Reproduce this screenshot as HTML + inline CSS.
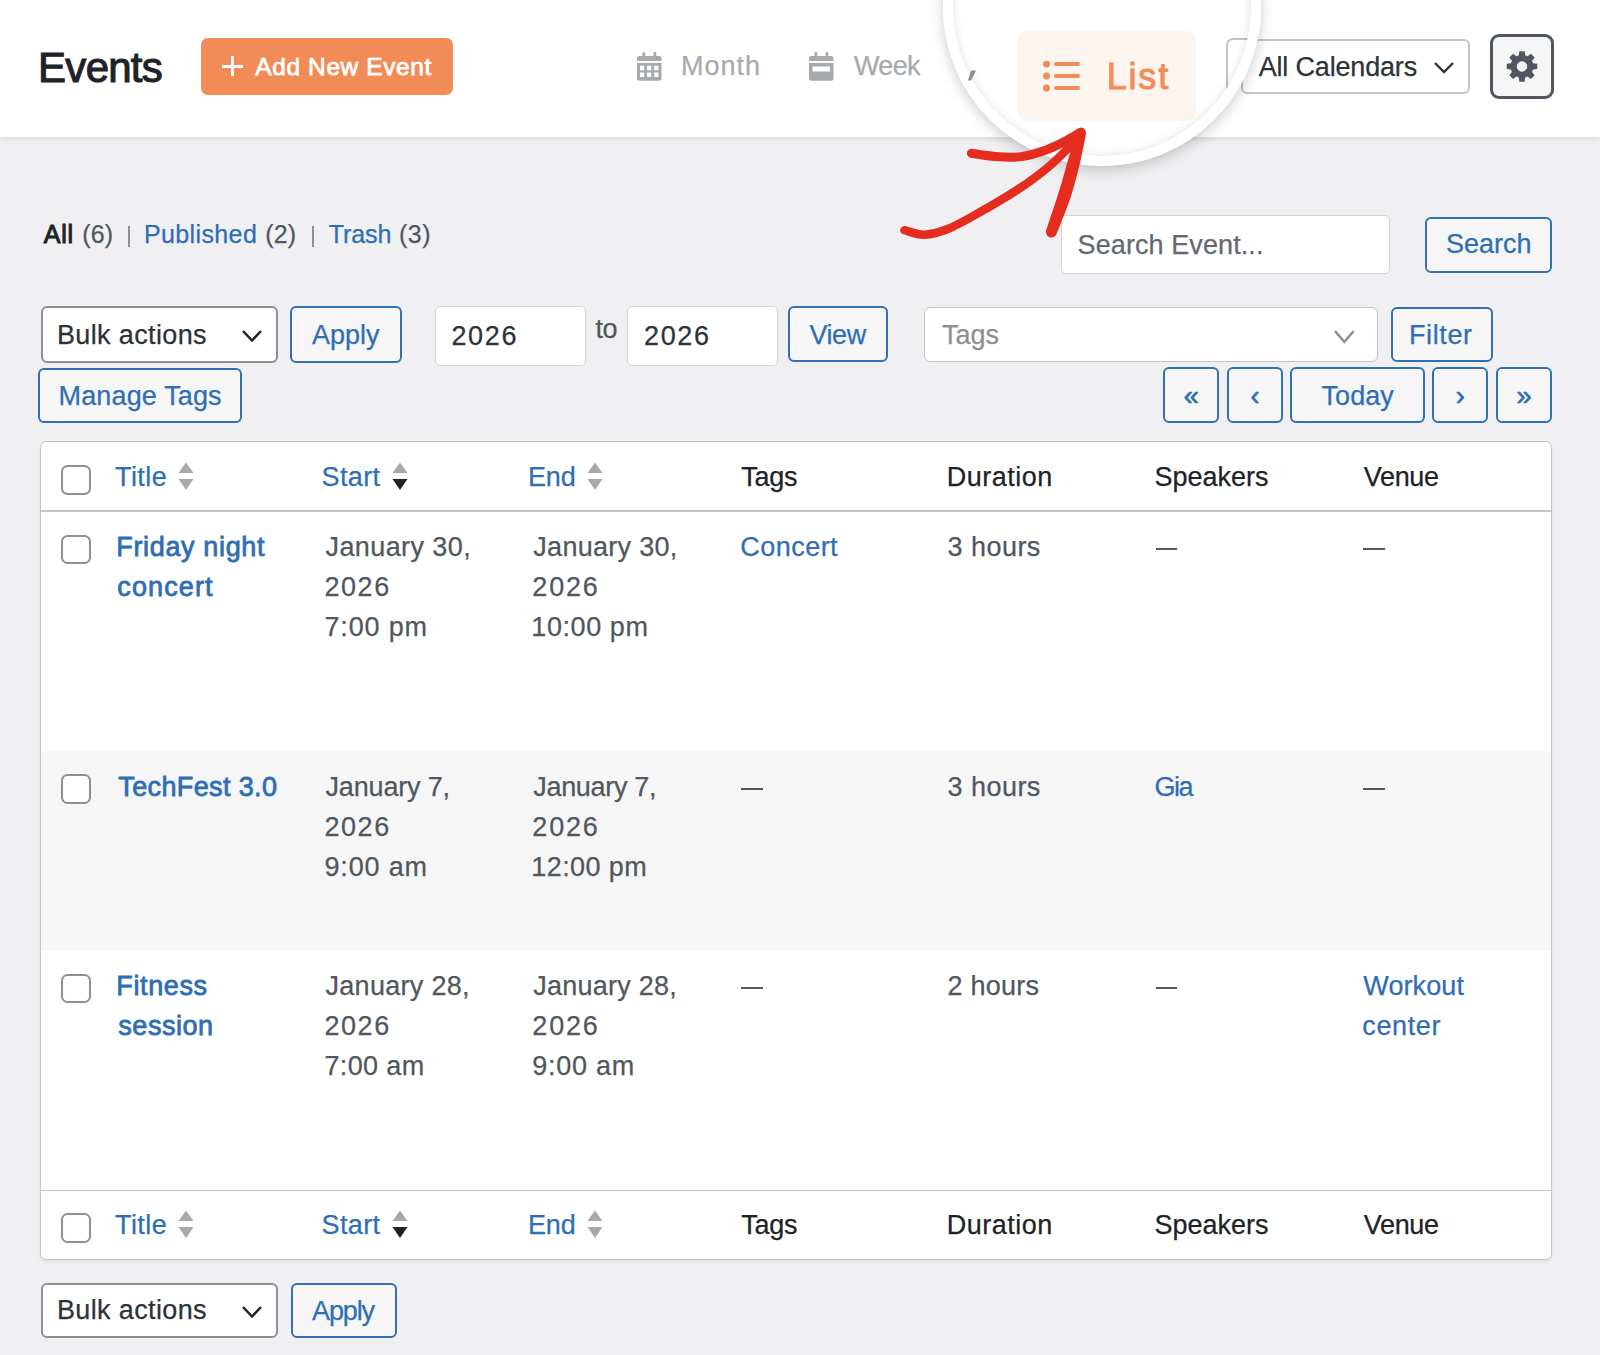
<!DOCTYPE html><html><head><meta charset="utf-8"><style>html,body{margin:0;padding:0;}body{width:1600px;height:1355px;position:relative;overflow:hidden;background:#f0f0f2;font-family:"Liberation Sans",sans-serif;}span{position:absolute;}</style></head><body>
<div style="position:absolute;left:0;top:0;width:1600px;height:136.5px;background:#fff;box-shadow:0 1.5px 6px rgba(0,0,0,0.10);"></div>
<div style="position:absolute;left:201.3px;top:37.8px;width:252.00px;height:57.20px;box-sizing:border-box;background:#f18c56;border-radius:7px;"></div>
<div style="position:absolute;left:230.8px;top:56px;width:3.00px;height:20.00px;box-sizing:border-box;background:#fff;"></div>
<div style="position:absolute;left:222px;top:64.5px;width:20.60px;height:3.00px;box-sizing:border-box;background:#fff;"></div>
<svg style="position:absolute;left:636.5px;top:52px" width="25" height="29" viewBox="0 0 25 29"><rect x="5.5" y="0" width="2.8" height="6" rx="1.3" fill="#a7aaad"/><rect x="16.5" y="0" width="2.8" height="6" rx="1.3" fill="#a7aaad"/><path d="M0 9V6.5A2.5 2.5 0 0 1 2.5 4H22A2.5 2.5 0 0 1 24.5 6.5V9z" fill="#a7aaad"/><path d="M0 11H24.5V26.2A2.5 2.5 0 0 1 22 28.7H2.5A2.5 2.5 0 0 1 0 26.2z M3.05 13.80h4.2v4.4h-4.2z M10.10 13.80h4.2v4.4h-4.2z M17.20 13.80h4.2v4.4h-4.2z M3.05 20.60h4.2v4.4h-4.2z M10.10 20.60h4.2v4.4h-4.2z M17.20 20.60h4.2v4.4h-4.2z" fill="#a7aaad" fill-rule="evenodd"/></svg>
<svg style="position:absolute;left:808.5px;top:52px" width="25" height="29" viewBox="0 0 25 29"><rect x="5.5" y="0" width="2.8" height="6" rx="1.3" fill="#a7aaad"/><rect x="16.5" y="0" width="2.8" height="6" rx="1.3" fill="#a7aaad"/><path d="M0 9V6.5A2.5 2.5 0 0 1 2.5 4H22A2.5 2.5 0 0 1 24.5 6.5V9z" fill="#a7aaad"/><path d="M0 11H24.5V26.2A2.5 2.5 0 0 1 22 28.7H2.5A2.5 2.5 0 0 1 0 26.2z M3.5 14.5v4.9h17.5v-4.9z" fill="#a7aaad" fill-rule="evenodd"/></svg>
<div style="position:absolute;left:1240.6px;top:38.8px;width:229.50px;height:55.20px;box-sizing:border-box;background:#fff;border:2px solid #c3c4c7;border-radius:6px;"></div>
<svg style="position:absolute;left:1432px;top:60px" width="24" height="15" viewBox="0 0 24 15"><path d="M3 3l9 9l9-9" stroke="#2c3338" stroke-width="2.4" fill="none"/></svg>
<div style="position:absolute;left:1490.3px;top:34.2px;width:63.90px;height:64.40px;box-sizing:border-box;background:#f6f6f6;border:3.5px solid #50575e;border-radius:9px;"></div>
<svg style="position:absolute;left:0;top:0" width="1600" height="140"><path d="M1533.05 63.22 L1537.27 63.72 L1537.27 69.08 L1533.05 69.58 L1532.06 71.97 L1534.69 75.30 L1530.90 79.09 L1527.57 76.46 L1525.18 77.45 L1524.68 81.67 L1519.32 81.67 L1518.82 77.45 L1516.43 76.46 L1513.10 79.09 L1509.31 75.30 L1511.94 71.97 L1510.95 69.58 L1506.73 69.08 L1506.73 63.72 L1510.95 63.22 L1511.94 60.83 L1509.31 57.50 L1513.10 53.71 L1516.43 56.34 L1518.82 55.35 L1519.32 51.13 L1524.68 51.13 L1525.18 55.35 L1527.57 56.34 L1530.90 53.71 L1534.69 57.50 L1532.06 60.83Z M1527.2 66.4 A5.2 5.2 0 1 0 1516.8 66.4 A5.2 5.2 0 1 0 1527.2 66.4Z" fill="#50575e" fill-rule="evenodd"/></svg>
<div style="position:absolute;left:128.4px;top:225.6px;width:2.00px;height:21.90px;box-sizing:border-box;background:#8c8f94;"></div>
<div style="position:absolute;left:311.5px;top:225.6px;width:2.00px;height:21.90px;box-sizing:border-box;background:#8c8f94;"></div>
<div style="position:absolute;left:1061.4px;top:215.4px;width:328.90px;height:58.80px;box-sizing:border-box;background:#fff;border:1.5px solid #d3d4d7;border-radius:5px;"></div>
<div style="position:absolute;left:1425.4px;top:217px;width:126.60px;height:55.60px;box-sizing:border-box;background:#f6f6f7;border:2px solid #3170b4;border-radius:6px;"></div>
<div style="position:absolute;left:40.5px;top:306.25px;width:237.50px;height:56.25px;box-sizing:border-box;background:#fff;border:2px solid #8c8f94;border-radius:6px;"></div>
<svg style="position:absolute;left:240px;top:328px" width="24" height="15" viewBox="-2 -2 24 15"><path d="M1 1L10.0 10.5L19 1" stroke="#1d2327" stroke-width="2.5" fill="none"/></svg>
<div style="position:absolute;left:290px;top:306px;width:111.75px;height:56.50px;box-sizing:border-box;background:#f6f6f7;border:2px solid #3170b4;border-radius:6px;"></div>
<div style="position:absolute;left:435px;top:306.4px;width:150.60px;height:59.60px;box-sizing:border-box;background:#fff;border:1.5px solid #d3d4d7;border-radius:5px;"></div>
<div style="position:absolute;left:627px;top:306.4px;width:150.60px;height:59.60px;box-sizing:border-box;background:#fff;border:1.5px solid #d3d4d7;border-radius:5px;"></div>
<div style="position:absolute;left:788px;top:306.4px;width:100.00px;height:56.10px;box-sizing:border-box;background:#f6f6f7;border:2px solid #3170b4;border-radius:6px;"></div>
<div style="position:absolute;left:924.4px;top:306.5px;width:453.80px;height:55.30px;box-sizing:border-box;background:#fff;border:1.5px solid #c3c4c7;border-radius:6px;"></div>
<svg style="position:absolute;left:1332px;top:328px" width="24.7" height="16.4" viewBox="-2 -2 24.7 16.4"><path d="M1 1L10.35 11.9L19.7 1" stroke="#8c8f94" stroke-width="2.5" fill="none"/></svg>
<div style="position:absolute;left:1390.6px;top:306.5px;width:102.40px;height:55.30px;box-sizing:border-box;background:#f6f6f7;border:2px solid #3170b4;border-radius:6px;"></div>
<div style="position:absolute;left:38.25px;top:367.5px;width:203.75px;height:55.75px;box-sizing:border-box;background:#f6f6f7;border:2px solid #3170b4;border-radius:6px;"></div>
<div style="position:absolute;left:1163.3px;top:367.2px;width:56.10px;height:55.70px;box-sizing:border-box;background:#f6f6f7;border:2px solid #3170b4;border-radius:6px;"></div>
<div style="position:absolute;left:1163.3px;top:368.8px;width:56.10px;height:55.7px;text-align:center;font:400 27px/55.7px 'Liberation Sans',sans-serif;color:#2f6eb3;-webkit-text-stroke:0.7px #2f6eb3;">«</div>
<div style="position:absolute;left:1226.8px;top:367.2px;width:56.60px;height:55.70px;box-sizing:border-box;background:#f6f6f7;border:2px solid #3170b4;border-radius:6px;"></div>
<div style="position:absolute;left:1226.8px;top:368.8px;width:56.60px;height:55.7px;text-align:center;font:400 27px/55.7px 'Liberation Sans',sans-serif;color:#2f6eb3;-webkit-text-stroke:0.7px #2f6eb3;">‹</div>
<div style="position:absolute;left:1290.4px;top:367.2px;width:134.50px;height:55.70px;box-sizing:border-box;background:#f6f6f7;border:2px solid #3170b4;border-radius:6px;"></div>
<div style="position:absolute;left:1290.4px;top:368.8px;width:134.50px;height:55.7px;text-align:center;font:400 27px/55.7px 'Liberation Sans',sans-serif;color:#2f6eb3;-webkit-text-stroke:0.25px #2f6eb3;">Today</div>
<div style="position:absolute;left:1431.9px;top:367.2px;width:56.50px;height:55.70px;box-sizing:border-box;background:#f6f6f7;border:2px solid #3170b4;border-radius:6px;"></div>
<div style="position:absolute;left:1431.9px;top:368.8px;width:56.50px;height:55.7px;text-align:center;font:400 27px/55.7px 'Liberation Sans',sans-serif;color:#2f6eb3;-webkit-text-stroke:0.7px #2f6eb3;">›</div>
<div style="position:absolute;left:1495.8px;top:367.2px;width:56.50px;height:55.70px;box-sizing:border-box;background:#f6f6f7;border:2px solid #3170b4;border-radius:6px;"></div>
<div style="position:absolute;left:1495.8px;top:368.8px;width:56.50px;height:55.7px;text-align:center;font:400 27px/55.7px 'Liberation Sans',sans-serif;color:#2f6eb3;-webkit-text-stroke:0.7px #2f6eb3;">»</div>
<div style="position:absolute;left:39.5px;top:441px;width:1512.50px;height:819.00px;box-sizing:border-box;background:#fff;border:1.5px solid #c3c4c7;border-radius:6px;box-shadow:0 2px 4px rgba(0,0,0,0.06);"></div>
<div style="position:absolute;left:41px;top:750.5px;width:1509.50px;height:199.50px;box-sizing:border-box;background:#f6f6f7;"></div>
<div style="position:absolute;left:41px;top:510px;width:1509.50px;height:1.50px;box-sizing:border-box;background:#c3c4c7;"></div>
<div style="position:absolute;left:41px;top:1189.5px;width:1509.50px;height:1.50px;box-sizing:border-box;background:#c3c4c7;"></div>
<div style="position:absolute;left:61.2px;top:465px;width:29.70px;height:29.70px;box-sizing:border-box;background:#fff;border:2px solid #8c8f94;border-radius:6.5px;"></div>
<svg style="position:absolute;left:178px;top:462px" width="16" height="28" viewBox="0 0 16 28"><path d="M8 0.5L15.5 11H0.5z" fill="#a7aaad"/><path d="M0.5 17H15.5L8 28z" fill="#a7aaad"/></svg>
<svg style="position:absolute;left:392px;top:462px" width="16" height="28" viewBox="0 0 16 28"><path d="M8 0.5L15.5 11H0.5z" fill="#a7aaad"/><path d="M0.5 17H15.5L8 28z" fill="#1d2327"/></svg>
<svg style="position:absolute;left:587px;top:462px" width="16" height="28" viewBox="0 0 16 28"><path d="M8 0.5L15.5 11H0.5z" fill="#a7aaad"/><path d="M0.5 17H15.5L8 28z" fill="#a7aaad"/></svg>
<div style="position:absolute;left:61.2px;top:1213.2px;width:29.70px;height:29.70px;box-sizing:border-box;background:#fff;border:2px solid #8c8f94;border-radius:6.5px;"></div>
<svg style="position:absolute;left:178px;top:1210.2px" width="16" height="28" viewBox="0 0 16 28"><path d="M8 0.5L15.5 11H0.5z" fill="#a7aaad"/><path d="M0.5 17H15.5L8 28z" fill="#a7aaad"/></svg>
<svg style="position:absolute;left:392px;top:1210.2px" width="16" height="28" viewBox="0 0 16 28"><path d="M8 0.5L15.5 11H0.5z" fill="#a7aaad"/><path d="M0.5 17H15.5L8 28z" fill="#1d2327"/></svg>
<svg style="position:absolute;left:587px;top:1210.2px" width="16" height="28" viewBox="0 0 16 28"><path d="M8 0.5L15.5 11H0.5z" fill="#a7aaad"/><path d="M0.5 17H15.5L8 28z" fill="#a7aaad"/></svg>
<div style="position:absolute;left:61.2px;top:534.5px;width:29.70px;height:29.70px;box-sizing:border-box;background:#fff;border:2px solid #8c8f94;border-radius:6.5px;"></div>
<div style="position:absolute;left:1155.5px;top:548.1px;width:21.50px;height:2.30px;box-sizing:border-box;background:#50575e;"></div>
<div style="position:absolute;left:1363.3px;top:548.1px;width:21.50px;height:2.30px;box-sizing:border-box;background:#50575e;"></div>
<div style="position:absolute;left:61.2px;top:774.0px;width:29.70px;height:29.70px;box-sizing:border-box;background:#fff;border:2px solid #8c8f94;border-radius:6.5px;"></div>
<div style="position:absolute;left:741.2px;top:787.6px;width:21.50px;height:2.30px;box-sizing:border-box;background:#50575e;"></div>
<div style="position:absolute;left:1363.3px;top:787.6px;width:21.50px;height:2.30px;box-sizing:border-box;background:#50575e;"></div>
<div style="position:absolute;left:61.2px;top:973.5px;width:29.70px;height:29.70px;box-sizing:border-box;background:#fff;border:2px solid #8c8f94;border-radius:6.5px;"></div>
<div style="position:absolute;left:741.2px;top:987.1px;width:21.50px;height:2.30px;box-sizing:border-box;background:#50575e;"></div>
<div style="position:absolute;left:1155.5px;top:987.1px;width:21.50px;height:2.30px;box-sizing:border-box;background:#50575e;"></div>
<div style="position:absolute;left:40.5px;top:1282.5px;width:237.00px;height:55.50px;box-sizing:border-box;background:#fff;border:2px solid #8c8f94;border-radius:6px;"></div>
<svg style="position:absolute;left:240px;top:1304px" width="24" height="15" viewBox="-2 -2 24 15"><path d="M1 1L10.0 10.5L19 1" stroke="#1d2327" stroke-width="2.5" fill="none"/></svg>
<div style="position:absolute;left:290.5px;top:1282.5px;width:106.25px;height:55.50px;box-sizing:border-box;background:#f6f6f7;border:2px solid #3170b4;border-radius:6px;"></div>
<span style="position:absolute;left:38.10px;top:46.90px;font:400 42px/42px 'Liberation Sans',sans-serif;color:#1d2327;white-space:nowrap;letter-spacing:-0.740px;-webkit-text-stroke:1.1px #1d2327;">Events</span>
<span style="position:absolute;left:255.30px;top:55.17px;font:400 24.5px/24.5px 'Liberation Sans',sans-serif;color:#fff;white-space:nowrap;letter-spacing:0.600px;-webkit-text-stroke:0.75px #fff;">Add New Event</span>
<span style="position:absolute;left:681.00px;top:53.45px;font:400 27px/27px 'Liberation Sans',sans-serif;color:#a7aaad;white-space:nowrap;letter-spacing:1.000px;-webkit-text-stroke:0.25px #a7aaad;">Month</span>
<span style="position:absolute;left:854.00px;top:53.45px;font:400 27px/27px 'Liberation Sans',sans-serif;color:#a7aaad;white-space:nowrap;letter-spacing:-0.667px;-webkit-text-stroke:0.25px #a7aaad;">Week</span>
<span style="position:absolute;left:1258.70px;top:53.85px;font:400 27px/27px 'Liberation Sans',sans-serif;color:#2c3338;white-space:nowrap;letter-spacing:-0.175px;-webkit-text-stroke:0.25px #2c3338;">All Calendars</span>
<span style="position:absolute;left:43.75px;top:221.55px;font:400 25px/25px 'Liberation Sans',sans-serif;color:#1d2327;white-space:nowrap;letter-spacing:0.750px;-webkit-text-stroke:1.0px #1d2327;">All</span>
<span style="position:absolute;left:82.25px;top:221.55px;font:400 25px/25px 'Liberation Sans',sans-serif;color:#50575e;white-space:nowrap;letter-spacing:0.125px;-webkit-text-stroke:0.25px #50575e;">(6)</span>
<span style="position:absolute;left:144.00px;top:221.55px;font:400 25px/25px 'Liberation Sans',sans-serif;color:#2f6eb3;white-space:nowrap;letter-spacing:0.375px;-webkit-text-stroke:0.25px #2f6eb3;">Published</span>
<span style="position:absolute;left:265.25px;top:221.55px;font:400 25px/25px 'Liberation Sans',sans-serif;color:#50575e;white-space:nowrap;letter-spacing:0.125px;-webkit-text-stroke:0.25px #50575e;">(2)</span>
<span style="position:absolute;left:328.70px;top:221.55px;font:400 25px/25px 'Liberation Sans',sans-serif;color:#2f6eb3;white-space:nowrap;letter-spacing:-0.075px;-webkit-text-stroke:0.25px #2f6eb3;">Trash</span>
<span style="position:absolute;left:399.00px;top:221.55px;font:400 25px/25px 'Liberation Sans',sans-serif;color:#50575e;white-space:nowrap;letter-spacing:0.500px;-webkit-text-stroke:0.25px #50575e;">(3)</span>
<span style="position:absolute;left:1077.60px;top:232.45px;font:400 27px/27px 'Liberation Sans',sans-serif;color:#646970;white-space:nowrap;letter-spacing:0.086px;-webkit-text-stroke:0.25px #646970;">Search Event...</span>
<span style="position:absolute;left:1446.00px;top:231.45px;font:400 27px/27px 'Liberation Sans',sans-serif;color:#2f6eb3;white-space:nowrap;letter-spacing:-0.020px;-webkit-text-stroke:0.25px #2f6eb3;">Search</span>
<span style="position:absolute;left:57.00px;top:321.55px;font:400 27px/27px 'Liberation Sans',sans-serif;color:#2c3338;white-space:nowrap;letter-spacing:0.364px;-webkit-text-stroke:0.25px #2c3338;">Bulk actions</span>
<span style="position:absolute;left:312.00px;top:321.85px;font:400 27px/27px 'Liberation Sans',sans-serif;color:#2f6eb3;white-space:nowrap;letter-spacing:0.000px;-webkit-text-stroke:0.25px #2f6eb3;">Apply</span>
<span style="position:absolute;left:451.40px;top:323.05px;font:400 27px/27px 'Liberation Sans',sans-serif;color:#2c3338;white-space:nowrap;letter-spacing:1.667px;-webkit-text-stroke:0.25px #2c3338;">2026</span>
<span style="position:absolute;left:595.50px;top:315.55px;font:400 27px/27px 'Liberation Sans',sans-serif;color:#50575e;white-space:nowrap;letter-spacing:-0.500px;-webkit-text-stroke:0.25px #50575e;">to</span>
<span style="position:absolute;left:644.00px;top:323.05px;font:400 27px/27px 'Liberation Sans',sans-serif;color:#2c3338;white-space:nowrap;letter-spacing:1.667px;-webkit-text-stroke:0.25px #2c3338;">2026</span>
<span style="position:absolute;left:809.40px;top:321.85px;font:400 27px/27px 'Liberation Sans',sans-serif;color:#2f6eb3;white-space:nowrap;letter-spacing:-0.400px;-webkit-text-stroke:0.25px #2f6eb3;">View</span>
<span style="position:absolute;left:942.00px;top:321.85px;font:400 27px/27px 'Liberation Sans',sans-serif;color:#8c8f94;white-space:nowrap;letter-spacing:0.000px;-webkit-text-stroke:0.25px #8c8f94;">Tags</span>
<span style="position:absolute;left:1409.00px;top:321.85px;font:400 27px/27px 'Liberation Sans',sans-serif;color:#2f6eb3;white-space:nowrap;letter-spacing:0.600px;-webkit-text-stroke:0.25px #2f6eb3;">Filter</span>
<span style="position:absolute;left:58.50px;top:382.85px;font:400 27px/27px 'Liberation Sans',sans-serif;color:#2f6eb3;white-space:nowrap;letter-spacing:0.150px;-webkit-text-stroke:0.25px #2f6eb3;">Manage Tags</span>
<span style="position:absolute;left:115.00px;top:464.25px;font:400 27px/27px 'Liberation Sans',sans-serif;color:#2f6eb3;white-space:nowrap;letter-spacing:0.438px;-webkit-text-stroke:0.25px #2f6eb3;">Title</span>
<span style="position:absolute;left:321.50px;top:464.25px;font:400 27px/27px 'Liberation Sans',sans-serif;color:#2f6eb3;white-space:nowrap;letter-spacing:0.375px;-webkit-text-stroke:0.25px #2f6eb3;">Start</span>
<span style="position:absolute;left:528.00px;top:464.25px;font:400 27px/27px 'Liberation Sans',sans-serif;color:#2f6eb3;white-space:nowrap;letter-spacing:-0.150px;-webkit-text-stroke:0.25px #2f6eb3;">End</span>
<span style="position:absolute;left:741.25px;top:464.25px;font:400 27px/27px 'Liberation Sans',sans-serif;color:#1d2327;white-space:nowrap;letter-spacing:-0.250px;-webkit-text-stroke:0.25px #1d2327;">Tags</span>
<span style="position:absolute;left:946.75px;top:464.25px;font:400 27px/27px 'Liberation Sans',sans-serif;color:#1d2327;white-space:nowrap;letter-spacing:0.500px;-webkit-text-stroke:0.25px #1d2327;">Duration</span>
<span style="position:absolute;left:1154.50px;top:464.25px;font:400 27px/27px 'Liberation Sans',sans-serif;color:#1d2327;white-space:nowrap;letter-spacing:0.000px;-webkit-text-stroke:0.25px #1d2327;">Speakers</span>
<span style="position:absolute;left:1363.75px;top:464.25px;font:400 27px/27px 'Liberation Sans',sans-serif;color:#1d2327;white-space:nowrap;letter-spacing:-0.312px;-webkit-text-stroke:0.25px #1d2327;">Venue</span>
<span style="position:absolute;left:115.00px;top:1212.45px;font:400 27px/27px 'Liberation Sans',sans-serif;color:#2f6eb3;white-space:nowrap;letter-spacing:0.438px;-webkit-text-stroke:0.25px #2f6eb3;">Title</span>
<span style="position:absolute;left:321.50px;top:1212.45px;font:400 27px/27px 'Liberation Sans',sans-serif;color:#2f6eb3;white-space:nowrap;letter-spacing:0.375px;-webkit-text-stroke:0.25px #2f6eb3;">Start</span>
<span style="position:absolute;left:528.00px;top:1212.45px;font:400 27px/27px 'Liberation Sans',sans-serif;color:#2f6eb3;white-space:nowrap;letter-spacing:-0.150px;-webkit-text-stroke:0.25px #2f6eb3;">End</span>
<span style="position:absolute;left:741.25px;top:1212.45px;font:400 27px/27px 'Liberation Sans',sans-serif;color:#1d2327;white-space:nowrap;letter-spacing:-0.250px;-webkit-text-stroke:0.25px #1d2327;">Tags</span>
<span style="position:absolute;left:946.75px;top:1212.45px;font:400 27px/27px 'Liberation Sans',sans-serif;color:#1d2327;white-space:nowrap;letter-spacing:0.500px;-webkit-text-stroke:0.25px #1d2327;">Duration</span>
<span style="position:absolute;left:1154.50px;top:1212.45px;font:400 27px/27px 'Liberation Sans',sans-serif;color:#1d2327;white-space:nowrap;letter-spacing:0.000px;-webkit-text-stroke:0.25px #1d2327;">Speakers</span>
<span style="position:absolute;left:1363.75px;top:1212.45px;font:400 27px/27px 'Liberation Sans',sans-serif;color:#1d2327;white-space:nowrap;letter-spacing:-0.312px;-webkit-text-stroke:0.25px #1d2327;">Venue</span>
<span style="position:absolute;left:116.30px;top:534.45px;font:400 27px/27px 'Liberation Sans',sans-serif;color:#2f6eb3;white-space:nowrap;letter-spacing:0.645px;-webkit-text-stroke:0.8px #2f6eb3;">Friday night</span>
<span style="position:absolute;left:117.30px;top:574.45px;font:400 27px/27px 'Liberation Sans',sans-serif;color:#2f6eb3;white-space:nowrap;letter-spacing:1.117px;-webkit-text-stroke:0.8px #2f6eb3;">concert</span>
<span style="position:absolute;left:325.50px;top:534.45px;font:400 27px/27px 'Liberation Sans',sans-serif;color:#50575e;white-space:nowrap;letter-spacing:0.410px;-webkit-text-stroke:0.25px #50575e;">January 30,</span>
<span style="position:absolute;left:324.50px;top:574.45px;font:400 27px/27px 'Liberation Sans',sans-serif;color:#50575e;white-space:nowrap;letter-spacing:1.533px;-webkit-text-stroke:0.25px #50575e;">2026</span>
<span style="position:absolute;left:324.50px;top:614.45px;font:400 27px/27px 'Liberation Sans',sans-serif;color:#50575e;white-space:nowrap;letter-spacing:0.833px;-webkit-text-stroke:0.25px #50575e;">7:00 pm</span>
<span style="position:absolute;left:533.30px;top:534.45px;font:400 27px/27px 'Liberation Sans',sans-serif;color:#50575e;white-space:nowrap;letter-spacing:0.290px;-webkit-text-stroke:0.25px #50575e;">January 30,</span>
<span style="position:absolute;left:532.30px;top:574.45px;font:400 27px/27px 'Liberation Sans',sans-serif;color:#50575e;white-space:nowrap;letter-spacing:1.833px;-webkit-text-stroke:0.25px #50575e;">2026</span>
<span style="position:absolute;left:531.30px;top:614.45px;font:400 27px/27px 'Liberation Sans',sans-serif;color:#50575e;white-space:nowrap;letter-spacing:0.571px;-webkit-text-stroke:0.25px #50575e;">10:00 pm</span>
<span style="position:absolute;left:740.20px;top:534.45px;font:400 27px/27px 'Liberation Sans',sans-serif;color:#2f6eb3;white-space:nowrap;letter-spacing:0.483px;-webkit-text-stroke:0.25px #2f6eb3;">Concert</span>
<span style="position:absolute;left:947.60px;top:534.45px;font:400 27px/27px 'Liberation Sans',sans-serif;color:#50575e;white-space:nowrap;letter-spacing:0.450px;-webkit-text-stroke:0.25px #50575e;">3 hours</span>
<span style="position:absolute;left:118.30px;top:773.95px;font:400 27px/27px 'Liberation Sans',sans-serif;color:#2f6eb3;white-space:nowrap;letter-spacing:0.373px;-webkit-text-stroke:0.8px #2f6eb3;">TechFest 3.0</span>
<span style="position:absolute;left:325.50px;top:773.95px;font:400 27px/27px 'Liberation Sans',sans-serif;color:#50575e;white-space:nowrap;letter-spacing:-0.167px;-webkit-text-stroke:0.25px #50575e;">January 7,</span>
<span style="position:absolute;left:324.50px;top:813.95px;font:400 27px/27px 'Liberation Sans',sans-serif;color:#50575e;white-space:nowrap;letter-spacing:1.533px;-webkit-text-stroke:0.25px #50575e;">2026</span>
<span style="position:absolute;left:324.50px;top:853.95px;font:400 27px/27px 'Liberation Sans',sans-serif;color:#50575e;white-space:nowrap;letter-spacing:0.833px;-webkit-text-stroke:0.25px #50575e;">9:00 am</span>
<span style="position:absolute;left:533.30px;top:773.95px;font:400 27px/27px 'Liberation Sans',sans-serif;color:#50575e;white-space:nowrap;letter-spacing:-0.322px;-webkit-text-stroke:0.25px #50575e;">January 7,</span>
<span style="position:absolute;left:532.30px;top:813.95px;font:400 27px/27px 'Liberation Sans',sans-serif;color:#50575e;white-space:nowrap;letter-spacing:1.833px;-webkit-text-stroke:0.25px #50575e;">2026</span>
<span style="position:absolute;left:531.30px;top:853.95px;font:400 27px/27px 'Liberation Sans',sans-serif;color:#50575e;white-space:nowrap;letter-spacing:0.414px;-webkit-text-stroke:0.25px #50575e;">12:00 pm</span>
<span style="position:absolute;left:947.60px;top:773.95px;font:400 27px/27px 'Liberation Sans',sans-serif;color:#50575e;white-space:nowrap;letter-spacing:0.450px;-webkit-text-stroke:0.25px #50575e;">3 hours</span>
<span style="position:absolute;left:1154.50px;top:773.95px;font:400 27px/27px 'Liberation Sans',sans-serif;color:#2f6eb3;white-space:nowrap;letter-spacing:-1.500px;-webkit-text-stroke:0.25px #2f6eb3;">Gia</span>
<span style="position:absolute;left:116.30px;top:973.45px;font:400 27px/27px 'Liberation Sans',sans-serif;color:#2f6eb3;white-space:nowrap;letter-spacing:0.633px;-webkit-text-stroke:0.8px #2f6eb3;">Fitness</span>
<span style="position:absolute;left:118.30px;top:1013.45px;font:400 27px/27px 'Liberation Sans',sans-serif;color:#2f6eb3;white-space:nowrap;letter-spacing:0.533px;-webkit-text-stroke:0.8px #2f6eb3;">session</span>
<span style="position:absolute;left:325.50px;top:973.45px;font:400 27px/27px 'Liberation Sans',sans-serif;color:#50575e;white-space:nowrap;letter-spacing:0.300px;-webkit-text-stroke:0.25px #50575e;">January 28,</span>
<span style="position:absolute;left:324.50px;top:1013.45px;font:400 27px/27px 'Liberation Sans',sans-serif;color:#50575e;white-space:nowrap;letter-spacing:1.533px;-webkit-text-stroke:0.25px #50575e;">2026</span>
<span style="position:absolute;left:324.50px;top:1053.45px;font:400 27px/27px 'Liberation Sans',sans-serif;color:#50575e;white-space:nowrap;letter-spacing:0.350px;-webkit-text-stroke:0.25px #50575e;">7:00 am</span>
<span style="position:absolute;left:533.30px;top:973.45px;font:400 27px/27px 'Liberation Sans',sans-serif;color:#50575e;white-space:nowrap;letter-spacing:0.230px;-webkit-text-stroke:0.25px #50575e;">January 28,</span>
<span style="position:absolute;left:532.30px;top:1013.45px;font:400 27px/27px 'Liberation Sans',sans-serif;color:#50575e;white-space:nowrap;letter-spacing:1.833px;-webkit-text-stroke:0.25px #50575e;">2026</span>
<span style="position:absolute;left:532.30px;top:1053.45px;font:400 27px/27px 'Liberation Sans',sans-serif;color:#50575e;white-space:nowrap;letter-spacing:0.717px;-webkit-text-stroke:0.25px #50575e;">9:00 am</span>
<span style="position:absolute;left:947.60px;top:973.45px;font:400 27px/27px 'Liberation Sans',sans-serif;color:#50575e;white-space:nowrap;letter-spacing:0.217px;-webkit-text-stroke:0.25px #50575e;">2 hours</span>
<span style="position:absolute;left:1363.30px;top:973.45px;font:400 27px/27px 'Liberation Sans',sans-serif;color:#2f6eb3;white-space:nowrap;letter-spacing:0.100px;-webkit-text-stroke:0.25px #2f6eb3;">Workout</span>
<span style="position:absolute;left:1362.30px;top:1013.45px;font:400 27px/27px 'Liberation Sans',sans-serif;color:#2f6eb3;white-space:nowrap;letter-spacing:0.620px;-webkit-text-stroke:0.25px #2f6eb3;">center</span>
<span style="position:absolute;left:57.00px;top:1296.55px;font:400 27px/27px 'Liberation Sans',sans-serif;color:#2c3338;white-space:nowrap;letter-spacing:0.364px;-webkit-text-stroke:0.25px #2c3338;">Bulk actions</span>
<span style="position:absolute;left:312.00px;top:1297.55px;font:400 27px/27px 'Liberation Sans',sans-serif;color:#2f6eb3;white-space:nowrap;letter-spacing:-1.125px;-webkit-text-stroke:0.25px #2f6eb3;">Apply</span>

<div style="position:absolute;left:943px;top:-152px;width:318px;height:318px;border-radius:50%;box-shadow:0 4px 14px rgba(0,0,0,0.20);"></div>
<div style="position:absolute;left:943px;top:-152px;width:318px;height:318px;border-radius:50%;background:#fff;overflow:hidden;">
  <div style="position:absolute;left:10px;top:10px;width:298px;height:298px;border-radius:50%;overflow:hidden;">
    <div style="position:absolute;left:63.5px;top:173px;width:179.5px;height:90px;background:#fcf4ee;border-radius:11px;"></div>
    <svg style="position:absolute;left:90px;top:203px" width="37" height="32" viewBox="0 0 37 32"><g fill="#f18c56"><circle cx="3.5" cy="3" r="3.5"/><circle cx="3.5" cy="15" r="3.5"/><circle cx="3.5" cy="27" r="3.5"/><rect x="11" y="1" width="26" height="4" rx="2"/><rect x="11" y="13" width="26" height="4" rx="2"/><rect x="11" y="25" width="26" height="4" rx="2"/></g></svg>
    <div style="position:absolute;left:273px;top:180px;width:80px;height:70px;border:2px solid #c3c4c7;border-radius:7px;box-sizing:border-box;"></div>
  </div>
</div>
<div style="position:absolute;left:953px;top:-142px;width:298px;height:298px;border-radius:50%;box-shadow:inset 0 0 10px rgba(0,0,0,0.13);"></div>

<svg style="position:absolute;left:960px;top:60px" width="30" height="30"><path d="M11 10.5h5l-5 10h-3z" fill="#8c8f94"/></svg>
<svg style="position:absolute;left:0;top:0" width="1600" height="300" viewBox="0 0 1600 300">
<g fill="none" stroke="#e52d1f" stroke-linecap="round" stroke-linejoin="round">
<path d="M904.4 230.2 C907.7 230.9 916.7 235.0 924.1 234.7 C931.5 234.4 939.4 232.4 949.0 228.5 C958.6 224.6 970.0 217.8 982.0 211.0 C994.0 204.2 1010.1 194.6 1021.0 187.4 C1031.9 180.2 1039.8 174.0 1047.5 167.7 C1055.2 161.4 1061.4 155.2 1067.0 149.4 C1072.6 143.6 1078.7 135.7 1081.0 133.0" stroke-width="8.5"/>
<path d="M971.4 153.3 C975.3 153.8 986.7 155.9 995.0 156.5 C1003.3 157.1 1012.5 157.8 1021.2 156.6 C1030.0 155.4 1039.9 152.1 1047.5 149.4 C1055.1 146.7 1061.4 143.1 1067.0 140.2 C1072.6 137.3 1078.7 133.4 1081.0 132.0" stroke-width="9"/>
</g>
<path d="M1076.1 131.8 L1075.9 132.5 L1075.7 133.2 L1075.4 134.0 L1075.2 134.9 L1074.9 135.9 L1074.6 137.0 L1074.2 138.1 L1073.9 139.3 L1073.6 140.5 L1073.2 141.7 L1072.8 143.0 L1072.5 144.4 L1072.1 145.7 L1071.7 147.1 L1071.3 148.5 L1070.9 149.9 L1070.5 151.3 L1070.1 152.8 L1069.7 154.2 L1069.3 155.6 L1068.9 156.9 L1068.4 158.3 L1068.1 159.6 L1067.7 160.9 L1067.3 162.2 L1066.9 163.5 L1066.6 164.8 L1066.2 166.1 L1065.9 167.4 L1065.5 168.8 L1065.2 170.1 L1064.8 171.4 L1064.4 172.7 L1064.1 174.1 L1063.7 175.4 L1063.3 176.8 L1062.9 178.1 L1062.5 179.5 L1062.2 180.8 L1061.8 182.2 L1061.4 183.6 L1060.9 184.9 L1060.5 186.3 L1060.1 187.7 L1059.7 189.1 L1059.2 190.5 L1058.8 191.9 L1058.3 193.3 L1057.9 194.8 L1057.4 196.3 L1056.9 197.9 L1056.4 199.6 L1055.9 201.3 L1055.3 203.0 L1054.7 204.8 L1054.1 206.5 L1053.5 208.3 L1052.9 210.1 L1052.3 211.9 L1051.7 213.6 L1051.1 215.4 L1050.6 217.1 L1050.0 218.7 L1049.5 220.3 L1048.9 221.9 L1048.4 223.3 L1048.0 224.7 L1047.6 226.0 L1047.2 227.2 L1046.8 228.3 L1046.5 229.3 L1046.2 230.1 A5.5 5.5 0 0 0 1056.6 233.9 L1056.6 233.9 L1056.9 233.1 L1057.3 232.1 L1057.7 231.1 L1058.2 229.9 L1058.7 228.7 L1059.2 227.3 L1059.8 225.9 L1060.4 224.4 L1061.0 222.8 L1061.7 221.1 L1062.3 219.5 L1063.0 217.8 L1063.7 216.0 L1064.4 214.2 L1065.1 212.5 L1065.7 210.7 L1066.4 208.9 L1067.1 207.1 L1067.7 205.4 L1068.4 203.7 L1069.0 202.0 L1069.6 200.4 L1070.2 198.8 L1070.7 197.3 L1071.1 195.8 L1071.6 194.3 L1072.0 192.9 L1072.5 191.4 L1072.9 190.0 L1073.3 188.6 L1073.7 187.1 L1074.1 185.7 L1074.5 184.3 L1074.9 182.9 L1075.2 181.5 L1075.6 180.1 L1076.0 178.8 L1076.3 177.4 L1076.7 176.0 L1077.0 174.7 L1077.4 173.3 L1077.7 172.0 L1078.1 170.7 L1078.4 169.3 L1078.7 168.0 L1079.1 166.7 L1079.4 165.4 L1079.7 164.1 L1080.0 162.8 L1080.3 161.4 L1080.7 160.0 L1081.0 158.5 L1081.3 157.1 L1081.6 155.6 L1081.9 154.2 L1082.2 152.7 L1082.5 151.3 L1082.8 149.8 L1083.1 148.4 L1083.4 147.0 L1083.7 145.7 L1083.9 144.3 L1084.2 143.0 L1084.4 141.8 L1084.7 140.6 L1084.9 139.5 L1085.1 138.4 L1085.3 137.4 L1085.5 136.5 L1085.6 135.6 L1085.7 134.9 L1085.9 134.2 A5.0 5.0 0 0 0 1076.1 131.8Z" fill="#e52d1f"/>
</svg>
<span style="position:absolute;left:1106.70px;top:59.00px;font:400 36px/36px 'Liberation Sans',sans-serif;color:#f18c56;white-space:nowrap;letter-spacing:1.833px;-webkit-text-stroke:0.9px #f18c56;z-index:5;">List</span>
</body></html>
